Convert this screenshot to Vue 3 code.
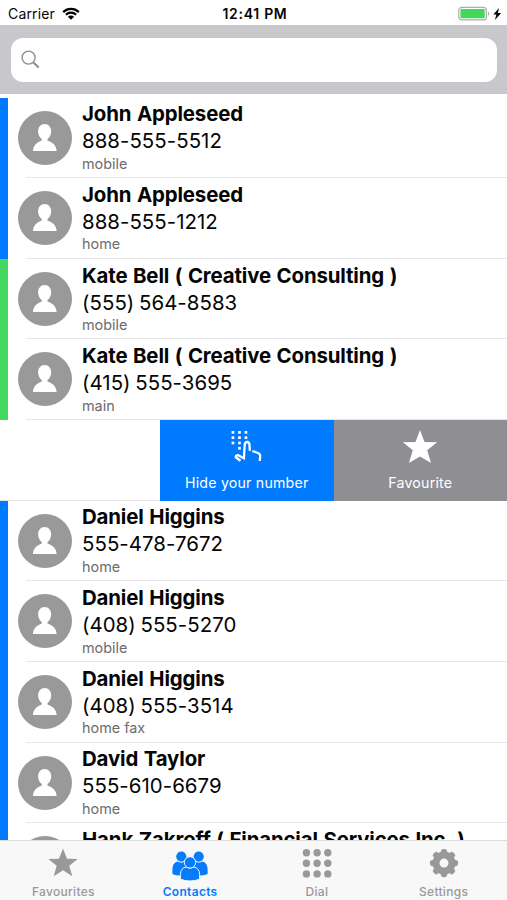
<script setup>
const contacts = [
  { name: 'John Appleseed', phone: '888-555-5512', label: 'mobile', bar: 'blue' },
  { name: 'John Appleseed', phone: '888-555-1212', label: 'home', bar: 'blue' },
  { name: 'Kate Bell ( Creative Consulting )', phone: '(555) 564-8583', label: 'mobile', bar: 'green' },
  { name: 'Kate Bell ( Creative Consulting )', phone: '(415) 555-3695', label: 'main', bar: 'green' },
  { swiped: true, bar: 'open' },
  { name: 'Daniel Higgins', phone: '555-478-7672', label: 'home', bar: 'blue' },
  { name: 'Daniel Higgins', phone: '(408) 555-5270', label: 'mobile', bar: 'blue' },
  { name: 'Daniel Higgins', phone: '(408) 555-3514', label: 'home fax', bar: 'blue' },
  { name: 'David Taylor', phone: '555-610-6679', label: 'home', bar: 'blue' },
  { name: 'Hank Zakroff ( Financial Services Inc. )', phone: '', label: '', bar: 'blue' },
]
const teeth = [0, 45, 90, 135, 180, 225, 270, 315]
const padDots = [[0, 0], [1, 0], [2, 0], [0, 1], [1, 1], [2, 1], [0, 2], [1, 2], [1, 3]]
</script>

<template>
  <div class="screen">
    <header class="status">
      <div class="carrier">
        <span>Carrier</span>
        <svg class="wifi" viewBox="0 0 18 13" width="18" height="13">
          <path d="M1.2 5.1a11.2 11.2 0 0 1 15.6 0M3.9 7.8a7.3 7.3 0 0 1 10.2 0" fill="none" stroke="#000" stroke-width="2.2" />
          <path d="M5.9 9.7a4.4 4.4 0 0 1 6.2 0L9 12.7z" />
        </svg>
      </div>
      <span class="time">12:41 PM</span>
      <div class="power">
        <svg viewBox="0 0 44 16" width="44" height="16">
          <rect x=".8" y="1.3" width="27.6" height="12.6" rx="3" fill="#fff" stroke="#adadad" stroke-width="1.2" />
          <rect x="2.4" y="2.9" width="24.3" height="9.4" rx="1" fill="#45d65c" />
          <path d="M30 5.2q2.6 2.4 0 4.8z" fill="#adadad" />
          <path d="M41 2 35.4 8.6h3L36.9 14 43.2 7h-3.3z" fill="#000" />
        </svg>
      </div>
    </header>

    <div class="search-area">
      <div class="search">
        <svg viewBox="0 0 20 20" width="20" height="20" fill="none" stroke="#8e8e90">
          <circle cx="7.6" cy="7.6" r="6.5" stroke-width="1.4" />
          <path d="m12.4 12.4 5.3 5.2" stroke-width="2.1" />
        </svg>
      </div>
    </div>

    <main class="list">
      <div v-for="(c, i) in contacts" :key="i" class="row" :class="c.bar">
        <template v-if="c.swiped">
          <div class="blank"></div>
          <div class="action hide">
            <svg viewBox="0 0 32 32" width="32" height="32">
              <rect v-for="(d, k) in padDots" :key="k" :x="0.6 + d[0] * 6.5" :y="0 + d[1] * 5.3" width="2.7" height="2.7" fill="#fff" />
              <path d="M9.5 29.8 5 26.5Q4.2 24.2 7 24.2L12.9 27.2 13.7 13.8Q14.2 10.8 16.3 11 18.4 11.2 18.5 14L18.8 19.8M21.4 20 27 22Q29.2 22.8 29.2 25L28.8 30" fill="none" stroke="#fff" stroke-width="2.3" />
            </svg>
            <span>Hide your number</span>
          </div>
          <div class="action fav">
            <svg viewBox="0 0 36 34" width="36" height="34">
              <path d="m18 0 4.5 12.1 12.7.2-10 8 3.9 12.7L18 26.6 6.9 33l3.9-12.7-10-8 12.7-.2z" fill="#fff" />
            </svg>
            <span>Favourite</span>
          </div>
        </template>
        <template v-else>
          <svg class="avatar" viewBox="0 0 54 54" width="54" height="54">
            <circle cx="27" cy="27" r="27" fill="#999" />
            <path d="M26.6 12.9c4 0 6.6 3.2 6.6 7.5 0 3.1-1.5 6-3.7 7.6v1.6c4.6 1.6 8.8 4.5 9.2 10.5H14.9c.4-6 4.5-8.9 8.9-10.5V28c-2.2-1.6-3.7-4.5-3.7-7.6 0-4.3 2.5-7.5 6.5-7.5z" fill="#fff" />
          </svg>
          <div class="info">
            <div class="name">{{ c.name }}</div>
            <div class="phone">{{ c.phone }}</div>
            <div class="label">{{ c.label }}</div>
          </div>
        </template>
      </div>
    </main>

    <nav class="tabs">
      <div class="tab">
        <svg viewBox="0 0 36 36" width="36" height="36">
          <path d="m18 2.6 4 10.1 10.7.4-8.4 6.7 3 10.5-9.3-6-9.3 6 3-10.5-8.4-6.7 10.7-.4z" fill="#999" />
        </svg>
        <span>Favourites</span>
      </div>
      <div class="tab active">
        <svg viewBox="0 0 36 36" width="36" height="36" fill="#087bfa">
          <circle cx="9.3" cy="10.6" r="5.1" />
          <circle cx="26.7" cy="10.6" r="5.1" />
          <path d="M.4 28v-5Q.6 17 5.4 15.6q3.9 2.2 7.6 0 4 1 5 5.5 1-4.5 5.2-5.5 3.6 2.2 7.4 0 4.8 1.4 5 7.4v5q-4.5 1.8-8.6 1.5H9q-4.5.3-8.6-1.5z" />
          <g stroke="#f8f8f8" stroke-width="1">
            <path d="M8.4 33.2v-4.8q.2-6.2 5.6-7.4 4 2.2 8 0 5.4 1.2 5.6 7.4v4.8q-9.6 3.6-19.2 0z" />
            <circle cx="18" cy="16.4" r="5.7" />
          </g>
        </svg>
        <span>Contacts</span>
      </div>
      <div class="tab">
        <svg viewBox="0 0 36 36" width="36" height="36" fill="#999">
          <template v-for="y in 3" :key="y">
            <circle v-for="x in 3" :key="x" :cx="-3.3 + x * 10.7" :cy="-3.9 + y * 10.6" r="3.7" />
          </template>
        </svg>
        <span>Dial</span>
      </div>
      <div class="tab">
        <svg viewBox="0 0 36 36" width="36" height="36" fill="#999">
          <rect v-for="a in teeth" :key="a" x="14.9" y="3" width="6.2" height="8" rx="2.4" :transform="`rotate(${a} 18 17.1)`" />
          <circle cx="18" cy="17.1" r="8" fill="none" stroke="#999" stroke-width="7" />
        </svg>
        <span>Settings</span>
      </div>
    </nav>
  </div>
</template>

<style>
body {
  margin: 0;
  background: #fff;
}
</style>

<style scoped>
.screen {
  width: 507px;
  height: 900px;
  display: flex;
  flex-direction: column;
  overflow: hidden;
  background: #fff;
  font-family: Inter, "Liberation Sans", sans-serif;
  color: #050505;
}
svg {
  display: block;
  flex: none;
}
.status {
  flex: none;
  height: 25px;
  box-sizing: border-box;
  padding: 2px 5px 0 8px;
  display: grid;
  grid-template-columns: 1fr auto 1fr;
  align-items: center;
  font-size: 14px;
}
.carrier {
  display: flex;
  align-items: center;
  gap: 7px;
  letter-spacing: 0.15px;
}
.time {
  font-weight: 600;
  font-size: 14px;
  letter-spacing: 0.7px;
}
.power {
  display: flex;
  justify-content: flex-end;
}
.search-area {
  flex: none;
  height: 69px;
  box-sizing: border-box;
  padding: 13px 10px 12px 11px;
  background: #c8c7cc;
}
.search {
  height: 44px;
  box-sizing: border-box;
  padding-left: 9.5px;
  display: flex;
  align-items: center;
  border-radius: 12px;
  background: #fff;
}
.list {
  flex: 1;
  min-height: 0;
  overflow: hidden;
  padding-top: 3.5px;
}
.row {
  height: 80.67px;
  box-sizing: border-box;
  display: flex;
  border-left: 8px solid transparent;
  background: linear-gradient(#e6e6e8, #e6e6e8) 18px 100% / 100% 1px no-repeat;
}
.row.open {
  border-left: 0;
  background-position: 0 100%;
}
.row.blue {
  border-left-color: #007aff;
}
.row.green {
  border-left-color: #44d95e;
}
.avatar {
  margin: 13px 10px 0;
}
.info {
  padding-top: 2.7px;
  white-space: nowrap;
}
.name {
  height: 27px;
  line-height: 27px;
  font-size: 20.4px;
  font-weight: 700;
  letter-spacing: -0.13px;
  word-spacing: 0.9px;
}
.phone {
  height: 27.4px;
  line-height: 27px;
  font-size: 20.4px;
  letter-spacing: 0.05px;
  word-spacing: -1.1px;
}
.label {
  height: 18px;
  line-height: 18px;
  font-size: 14.4px;
  color: #6c6c6c;
}
.blank {
  width: 160px;
  flex: none;
}
.action {
  flex: 1;
  display: flex;
  flex-direction: column;
  align-items: center;
  color: #fff;
  font-size: 14.2px;
  letter-spacing: 0.2px;
}
.action span {
  line-height: 18px;
  margin-top: auto;
  margin-bottom: 9px;
}
.hide {
  background: #007aff;
}
.hide svg {
  margin-top: 11px;
}
.fav {
  background: #8e8e93;
}
.fav svg {
  margin-top: 10px;
}
.tabs {
  flex: none;
  height: 60px;
  box-sizing: border-box;
  border-top: 1px solid #dcdcdc;
  background: #f8f8f8;
  display: grid;
  grid-template-columns: repeat(4, 1fr);
}
.tab {
  display: flex;
  flex-direction: column;
  align-items: center;
  padding-top: 5px;
  font-size: 12px;
  font-weight: 500;
  letter-spacing: 0.3px;
  color: #999;
}
.tab span {
  margin-top: 1px;
  line-height: 17px;
}
.tab.active {
  color: #087bfa;
  font-weight: 600;
}
</style>
